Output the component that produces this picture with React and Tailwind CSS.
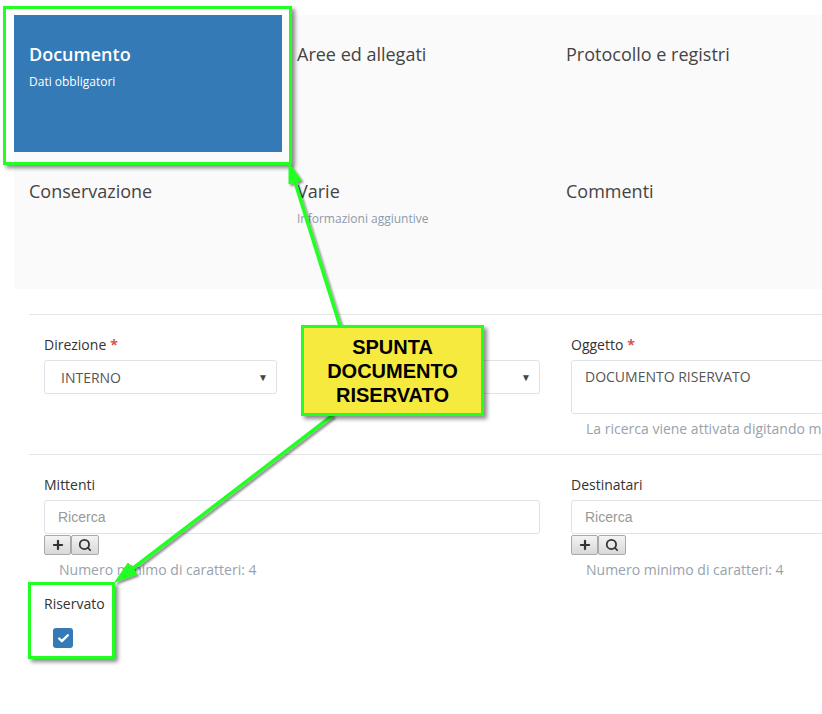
import React from "react";
import { Plus, Search, Check } from "lucide-react";

function Tile({ title, sub, active }) {
  return (
    <div className={`h-[137px] pt-[25px] pl-[15px] ${active ? "bg-[#337ab7]" : ""}`}>
      <div className={`text-[18px] leading-[28px] ${active ? "text-white font-semibold" : "text-[#444]"}`}>{title}</div>
      {sub && (
        <div className={`mt-[5px] text-[12px] leading-[17px] ${active ? "text-white" : "text-[#8c9aa8]"}`}>{sub}</div>
      )}
    </div>
  );
}

function Label({ children, req }) {
  return (
    <div className="text-[14px] leading-[20px] font-medium text-[#333] mb-[5px] whitespace-nowrap">
      {children}
      {req && <span className="text-[#d9534f] ml-[4px] font-bold">*</span>}
    </div>
  );
}

function Select({ value }) {
  return (
    <div className="h-[34px] w-[233px] border border-[#dde3e8] rounded-[3px] bg-white flex items-center justify-between pl-[16px] pr-[8px]">
      <span className="text-[14px] text-[#555] uppercase">{value}</span>
      <span className="text-[10px] text-[#444]">▼</span>
    </div>
  );
}

function SearchField({ width }) {
  return (
    <div>
      <div className={`h-[34px] ${width} border border-[#dde3e8] rounded-[3px] bg-white flex items-center pl-[13px]`}>
        <span className="text-[14px] text-[#999] font-['Liberation_Sans',sans-serif]">Ricerca</span>
      </div>
      <div className="flex mt-[1px]">
        <div className="w-[27px] h-[20px] border border-[#a9a9a9] bg-gradient-to-b from-[#f4f4f4] to-[#d8d8d8] rounded-[2px] flex items-center justify-center">
          <Plus size={14} strokeWidth={3.8} color="#333" />
        </div>
        <div className="w-[28px] h-[20px] border border-[#a9a9a9] bg-gradient-to-b from-[#f4f4f4] to-[#d8d8d8] rounded-[2px] flex items-center justify-center">
          <Search size={14} strokeWidth={3} color="#333" />
        </div>
      </div>
      <div className="mt-[5px] pl-[15px] text-[14px] leading-[20px] text-[#98a2ac] whitespace-nowrap">Numero minimo di caratteri: 4</div>
    </div>
  );
}

export default function App() {
  return (
    <div className="relative w-[822px] h-[714px] bg-white overflow-hidden font-['Open_Sans',sans-serif]">
      <div className="pt-[15px] pl-[14px]">
        <div className="grid grid-cols-[268px_269px_271px] bg-[#fafafa]">
          <Tile title="Documento" sub="Dati obbligatori" active />
          <Tile title="Aree ed allegati" />
          <Tile title="Protocollo e registri" />
          <Tile title="Conservazione" />
          <Tile title="Varie" sub="Informazioni aggiuntive" />
          <Tile title="Commenti" />
        </div>
      </div>

      <div className="ml-[29px] mt-[25px] border-t border-[#e5e5e5] pl-[15px] pt-[20px]">
        <div className="flex h-[119px]">
          <div className="w-[263px] shrink-0">
            <Label req>Direzione</Label>
            <Select value="INTERNO" />
          </div>
          <div className="w-[264px] shrink-0">
            <Label>&nbsp;</Label>
            <Select value="" />
          </div>
          <div className="shrink-0">
            <Label req>Oggetto</Label>
            <div className="h-[54px] w-[320px] border border-[#dde3e8] rounded-[3px] pl-[13px] pt-[3px]">
              <span className="text-[14px] text-[#555]">DOCUMENTO RISERVATO</span>
            </div>
            <div className="mt-[5px] pl-[15px] text-[14px] leading-[20px] text-[#98a2ac] whitespace-nowrap">
              La ricerca viene attivata digitando m
            </div>
          </div>
        </div>
      </div>

      <div className="ml-[29px] border-t border-[#e5e5e5] pl-[15px] pt-[20px]">
        <div className="flex">
          <div className="w-[527px] shrink-0">
            <Label>Mittenti</Label>
            <SearchField width="w-[496px]" />
          </div>
          <div className="shrink-0">
            <Label>Destinatari</Label>
            <SearchField width="w-[320px]" />
          </div>
        </div>
        <div className="mt-[14px]">
          <Label>Riservato</Label>
          <div className="ml-[9px] mt-[14px] w-[20px] h-[20px] rounded-[3px] bg-[#337ab7] flex items-center justify-center">
            <Check size={13} strokeWidth={4.5} color="#fff" />
          </div>
        </div>
      </div>

      {/* annotations */}
      <div className="absolute left-[3px] top-[6px] w-[289px] h-[159px] border-[3px] border-[#22ff22] shadow-[3px_3px_4px_rgba(0,0,0,0.45)]" />
      <div className="absolute left-[28px] top-[582px] w-[87px] h-[77px] border-[3px] border-[#22ff22] shadow-[3px_3px_4px_rgba(0,0,0,0.45)]" />
      <svg className="absolute left-0 top-0 pointer-events-none" width="822" height="714">
        <defs>
          <filter id="sh" x="-20%" y="-20%" width="140%" height="140%">
            <feDropShadow dx="2" dy="2" stdDeviation="1.2" floodColor="#000" floodOpacity="0.45" />
          </filter>
        </defs>
        <g filter="url(#sh)" fill="#22ff22" stroke="#22ff22">
          <line x1="340" y1="326" x2="295" y2="182" strokeWidth="3.5" />
          <polygon points="289,163 301,180 289,184" strokeWidth="1" />
          <line x1="333" y1="415" x2="132" y2="569" strokeWidth="3.5" />
          <polygon points="115,582 137,574 128,563" strokeWidth="1" />
        </g>
      </svg>
      <div className="absolute left-[301px] top-[325px] w-[183px] h-[91px] border-[3px] border-[#22ff22] bg-[#f7ea3e] shadow-[3px_3px_4px_rgba(0,0,0,0.45)] flex items-center justify-center">
        <div className="text-center font-['Liberation_Sans',sans-serif] font-bold text-[20px] leading-[24px] text-black">
          SPUNTA<br />DOCUMENTO<br />RISERVATO
        </div>
      </div>
    </div>
  );
}
